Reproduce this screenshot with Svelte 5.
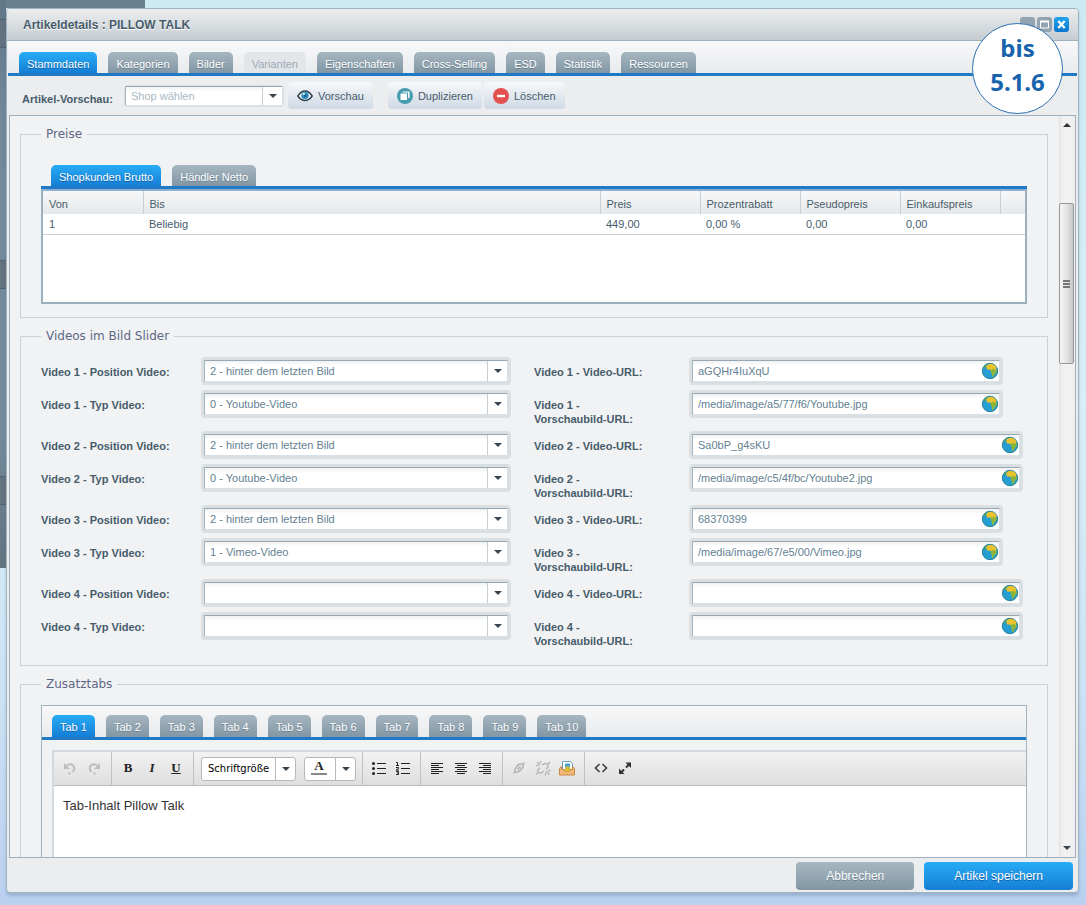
<script>
	const mainTabs = [
		'Stammdaten', 'Kategorien', 'Bilder', 'Varianten', 'Eigenschaften',
		'Cross-Selling', 'ESD', 'Statistik', 'Ressourcen'
	];
	const priceTabs = ['Shopkunden Brutto', 'Händler Netto'];
	const extraTabs = Array.from({ length: 10 }, (_, i) => `Tab ${i + 1}`);

	const positions = ['', '2 - hinter dem letzten Bild'];
	const types = ['', '0 - Youtube-Video', '1 - Vimeo-Video'];

	let activeMain = $state(0);
	let activePrice = $state(0);
	let activeExtra = $state(0);

	let videos = $state([
		{ position: positions[1], type: types[1], url: 'aGQHr4IuXqU', preview: '/media/image/a5/77/f6/Youtube.jpg', narrow: true },
		{ position: positions[1], type: types[1], url: 'Sa0bP_g4sKU', preview: '/media/image/c5/4f/bc/Youtube2.jpg' },
		{ position: positions[1], type: types[2], url: '68370399', preview: '/media/image/67/e5/00/Vimeo.jpg', narrow: true },
		{ position: '', type: '', url: '', preview: '' }
	]);

	let content = $state('Tab-Inhalt Pillow Talk');
</script>

{#snippet caret()}
	<svg class="caret" width="8" height="4" viewBox="0 0 8 4"><path d="M0 0h8L4 4z" fill="#3c4650" /></svg>
{/snippet}

{#snippet combo(id, item, key, options)}
	<div class="field combo">
		<select {id} bind:value={item[key]}>
			{#each options as option}
				<option value={option}>{option}</option>
			{/each}
		</select>
		<span class="trigger">{@render caret()}</span>
	</div>
{/snippet}

{#snippet urlField(id, item, key)}
	<div class="url" class:narrow={item.narrow}>
		<div class="field">
			<input {id} type="text" bind:value={item[key]} />
			<svg class="globe" width="18" height="18" viewBox="0 0 18 18">
				<circle cx="9" cy="9" r="7.700" fill="#259fd3" stroke="#2a8296" />
				<path d="M2.500 5A8 8 0 0 1 6 1.800L5 4.500 3 7z" fill="#4f9f6a" />
				<path d="M5.200 4.200C6 2.500 8 1.700 10 1.700c2.600.2 4.800 1.800 5.600 4.300L14 9.500 11.500 9 9.500 7.800 6 7.500z" fill="#ecc22c" />
				<path d="M9.600 7.500c1.800.6 2.300-1.200 3.600-.6.8.6 1 1.600 3 .9-.2 2.300-1.600 3.500-2.700 4.700-.7.900-.8 2.500-2 2.800-1-.8-.3-2.600-.9-3.800-.5-1.200-1.300-2-1-4z" fill="#8db53b" />
			</svg>
		</div>
	</div>
{/snippet}

<div class="desktop">
	<div class="backdrop-top"></div>
	<div class="backdrop-side"><i></i><i></i><i></i></div>

	<main class="window">
		<header>
			<h1>Artikeldetails : PILLOW TALK</h1>
			<div class="tools">
				<button aria-label="Minimieren"><svg viewBox="0 0 15 15"><path d="M4 10.500h7" stroke="#fff" stroke-width="2" /></svg></button>
				<button aria-label="Maximieren"><svg viewBox="0 0 15 15"><path d="M3.500 4.500h8v6.500h-8z" fill="none" stroke="#fff" /><path d="M3 4.500h9" stroke="#fff" stroke-width="2" /></svg></button>
				<button class="close" aria-label="Schließen"><svg viewBox="0 0 15 15"><path d="M4.300 4l6.400 7M10.700 4l-6.400 7" stroke="#fff" stroke-width="2.300" /></svg></button>
			</div>
			<div class="badge"><span>bis</span><span>5.1.6</span></div>
		</header>

		<nav class="tabs main">
			{#each mainTabs as tab, i}
				<button class:active={activeMain === i} disabled={tab === 'Varianten'} onclick={() => (activeMain = i)}><span>{tab}</span></button>
			{/each}
		</nav>

		<div class="toolbar">
			<label for="shop">Artikel-Vorschau:</label>
			<div class="field combo shop">
				<select id="shop"><option>Shop wählen</option></select>
				<span class="trigger">{@render caret()}</span>
			</div>
			<button class="preview">
				<svg width="16" height="14" viewBox="0 0 16 14">
					<path d="M.8 7Q4 2 8 2t7.200 5Q12 11.500 8 11.500T.8 7z" fill="#fff" stroke="#2d3f4c" stroke-width="1.400" />
					<circle cx="8" cy="6.500" r="3.800" fill="#3592c0" />
					<circle cx="8" cy="6.500" r="1.500" fill="#16587e" />
					<circle cx="6.800" cy="5" r="1.200" fill="#c9ecfa" />
				</svg>
				Vorschau
			</button>
			<button class="duplicate">
				<svg width="16" height="16" viewBox="0 0 16 16">
					<circle cx="8" cy="8" r="8" fill="#479caf" />
					<path d="M5.500 3.500h7v6.500h-7z" fill="#fff" />
					<path d="M3 5h7.500v7.500H3z" fill="#fff" stroke="#479caf" />
				</svg>
				Duplizieren
			</button>
			<button>
				<svg width="16" height="16" viewBox="0 0 16 16">
					<circle cx="8" cy="8" r="8" fill="#e2504f" />
					<path d="M4 8h8" stroke="#fff" stroke-width="2.400" />
				</svg>
				Löschen
			</button>
		</div>

		<div class="pane">
			<div class="content">
				<fieldset class="prices">
					<legend>Preise</legend>
					<nav class="tabs">
						{#each priceTabs as tab, i}
							<button class:active={activePrice === i} onclick={() => (activePrice = i)}><span>{tab}</span></button>
						{/each}
					</nav>
					<div class="grid">
						<table>
							<thead>
								<tr><th>Von</th><th class="wide">Bis</th><th>Preis</th><th>Prozentrabatt</th><th>Pseudopreis</th><th>Einkaufspreis</th><th class="rest"></th></tr>
							</thead>
							<tbody>
								<tr><td>1</td><td>Beliebig</td><td>449,00</td><td>0,00 %</td><td>0,00</td><td>0,00</td><td></td></tr>
							</tbody>
						</table>
					</div>
				</fieldset>

				<fieldset>
					<legend>Videos im Bild Slider</legend>
					<div class="videos">
						{#each videos as video, i}
							{@const n = i + 1}
							<label for="position{n}">Video {n} - Position Video:</label>
							{@render combo(`position${n}`, video, 'position', positions)}
							<label class="second" for="url{n}">Video {n} - Video-URL:</label>
							{@render urlField(`url${n}`, video, 'url')}

							<label for="type{n}">Video {n} - Typ Video:</label>
							{@render combo(`type${n}`, video, 'type', types)}
							<label class="second" for="preview{n}">Video {n} - <span>Vorschaubild-URL:</span></label>
							{@render urlField(`preview${n}`, video, 'preview')}
						{/each}
					</div>
				</fieldset>

				<fieldset>
					<legend>Zusatztabs</legend>
					<div class="panel">
						<nav class="tabs">
							{#each extraTabs as tab, i}
								<button class:active={activeExtra === i} onclick={() => (activeExtra = i)}><span>{tab}</span></button>
							{/each}
						</nav>
						<div class="editor">
							<div class="format">
								<div class="group">
									<button aria-label="Rückgängig"><svg viewBox="0 0 24 24"><path d="M9 9.500a4.200 4.200 0 1 1 5.500 6.300M12.500 17.500h-2" fill="none" stroke="#bcbcbc" stroke-width="2" /><path d="M6 7v6h6z" fill="#bcbcbc" /></svg></button>
									<button aria-label="Wiederholen"><svg viewBox="0 0 24 24"><path d="M15 9.500a4.200 4.200 0 1 0-5.500 6.300M11.500 17.500h2" fill="none" stroke="#bcbcbc" stroke-width="2" /><path d="M18 7v6h-6z" fill="#bcbcbc" /></svg></button>
								</div>
								<div class="group letters">
									<button><b>B</b></button>
									<button><i>I</i></button>
									<button><u>U</u></button>
								</div>
								<div class="group pickers">
									<div class="picker size">
										<select aria-label="Schriftgröße"><option>Schriftgröße</option></select>
										<span class="drop">{@render caret()}</span>
									</div>
									<button class="picker color" aria-label="Textfarbe">
										<span class="letter">A</span>
										<span class="drop">{@render caret()}</span>
									</button>
								</div>
								<div class="group">
									<button aria-label="Aufzählung"><svg viewBox="0 0 24 24"><path d="M10 7.500h9M10 12.500h9M10 17.500h9" stroke="#222" /><circle cx="6.500" cy="7.500" r="1.500" fill="#222" /><circle cx="6.500" cy="12.500" r="1.500" fill="#222" /><circle cx="6.500" cy="17.500" r="1.500" fill="#222" /></svg></button>
									<button aria-label="Nummerierung"><svg viewBox="0 0 24 24"><path d="M10 7.500h9M10 12.500h9M10 17.500h9" stroke="#222" /><path d="M5 6.500h1.500V9M5 9.500h3M5 11.500h2.500v1L5 14h3M5 15.500h2.500V17H6m1.500 0v1.500H5" fill="none" stroke="#222" /></svg></button>
								</div>
								<div class="group">
									<button aria-label="Linksbündig"><svg viewBox="0 0 24 24"><path d="M6 7.500h12M6 9.500h8M6 11.500h12M6 13.500h8M6 15.500h12M6 17.500h8" stroke="#222" /></svg></button>
									<button aria-label="Zentriert"><svg viewBox="0 0 24 24"><path d="M6 7.500h12M8 9.500h8M6 11.500h12M8 13.500h8M6 15.500h12M8 17.500h8" stroke="#222" /></svg></button>
									<button aria-label="Rechtsbündig"><svg viewBox="0 0 24 24"><path d="M6 7.500h12M10 9.500h8M6 11.500h12M10 13.500h8M6 15.500h12M10 17.500h8" stroke="#222" /></svg></button>
								</div>
								<div class="group">
									<button aria-label="Link"><svg viewBox="0 0 24 24"><path d="M9.500 10.500l3-2.500h3.500v3l-2.500 3M14 13.500l-3 2.500H8v-3l2.500-3M6.500 17.500L8 16M16 8l1.500-1.500M10.500 13.500l3-3" fill="none" stroke="#b5b5b5" stroke-width="1.700" /></svg></button>
									<button aria-label="Link entfernen"><svg viewBox="0 0 24 24"><path d="M11 9l3-1.500 3 .5v3l-2 2M13 15l-3 2-3-.5v-3l2-2M6 6l3 3M15 15l3.500 3.500M9.500 5v2.500M5 9.500h2.500M14.500 17v2.500M17 14.500h2.500M17 8l2-2M7 16.500l-2 2" fill="none" stroke="#b5b5b5" stroke-width="1.400" /></svg></button>
									<button aria-label="Medien"><svg viewBox="0 0 24 24">
										<path d="M7.500 5.500h8l2 2V14h-10z" fill="#fff" stroke="#6d9ab5" />
										<path d="M10 7.500h5v4h-5z" fill="#4ba1c9" /><path d="M10 12l2.500-2 3 2v2H10z" fill="#d8bb35" />
										<path d="M4.500 12.500l2-2v3h2.500l1 2h4.500l1-2h2v-3l2 2V19h-15z" fill="#f3b878" stroke="#c98844" />
										<path d="M10 14.500h4" stroke="#e0c51f" stroke-width="2" />
									</svg></button>
								</div>
								<div class="group last">
									<button aria-label="Quelltext"><svg viewBox="0 0 24 24"><path d="M10.500 8L6.500 12l4 4M13.500 8l4 4-4 4" fill="none" stroke="#444" stroke-width="1.700" /></svg></button>
									<button aria-label="Vollbild"><svg viewBox="0 0 24 24"><path d="M12.500 6.500H18V12zM6 12.500V18h5.500z" fill="#333" /><path d="M17 7.500l-4 4M11 13.500l-4 4" stroke="#333" stroke-width="2" /></svg></button>
								</div>
							</div>
							<textarea aria-label="Inhalt" bind:value={content}></textarea>
						</div>
					</div>
				</fieldset>
			</div>

			<div class="scrollbar">
				<button aria-label="Nach oben"><svg width="8" height="4" viewBox="0 0 8 4"><path d="M0 4h8L4 0z" fill="#333" /></svg></button>
				<div class="above"></div>
				<div class="thumb"><i></i><i></i><i></i></div>
				<div class="below"></div>
				<button aria-label="Nach unten">{@render caret()}</button>
			</div>
		</div>

		<footer>
			<button>Abbrechen</button>
			<button class="primary">Artikel speichern</button>
		</footer>
	</main>
</div>

<style>
:global(body) {
	margin: 0;
}

.desktop {
	position: relative;
	box-sizing: border-box;
	display: flex;
	height: 100vh;
	padding: 8px 7px 12px 6px;
	background: linear-gradient(#cceaf4, #d9eff7 45%, #cde3f5 75%, #b9d1ef);
	font: 11px/14px "Liberation Sans", Arial, sans-serif;
	color: #475c6a;
}

button, input, select, textarea {
	box-sizing: border-box;
	margin: 0;
	padding: 0;
	border: 0;
	border-radius: 0;
	background: none;
	font: inherit;
	color: inherit;
	outline: none;
}

.backdrop-top {
	position: absolute;
	top: 0;
	left: 0;
	width: 145px;
	height: 8px;
	background: #68808f;
}

.backdrop-side {
	position: absolute;
	top: 0;
	left: 0;
	width: 6px;
	height: 568px;
	background: linear-gradient(#607887, #71899a 20%, #758b9c 75%, #62747f);
}

.backdrop-side i {
	position: absolute;
	top: 260px;
	width: 6px;
	height: 27px;
	border: solid #50636f;
	border-width: 1px 0;
	background: #63737f;
}

.backdrop-side i:first-child {
	top: 19px;
}

.backdrop-side i:last-child {
	top: 476px;
}

.window {
	position: relative;
	flex: 1;
	min-width: 0;
	display: flex;
	flex-direction: column;
	border: 1px solid #9fb3c1;
	border-radius: 4px;
	background: #ebedef;
	box-shadow: 0 3px 3px rgba(80, 110, 150, .3);
}

header {
	position: relative;
	display: flex;
	align-items: center;
	justify-content: space-between;
	height: 31px;
	padding: 0 9px 0 16px;
	border-bottom: 1px solid #9fb0bb;
	border-radius: 3px 3px 0 0;
	background: linear-gradient(#eceeef, #c5cdd2);
}

h1 {
	margin: 0;
	font-size: 12px;
	line-height: 16px;
	text-shadow: 0 1px 0 #fff;
}

.tools {
	display: flex;
	gap: 2px;
}

.tools button {
	width: 15px;
	height: 15px;
	border-radius: 3px;
	background: #93a4b0;
}

.tools .close {
	background: linear-gradient(#23a3ee, #0b76cc);
}

.tools svg {
	display: block;
}

.badge {
	position: absolute;
	z-index: 1;
	top: 14px;
	right: 15px;
	box-sizing: border-box;
	display: flex;
	flex-direction: column;
	align-items: center;
	width: 91px;
	height: 91px;
	padding-top: 7px;
	border: 1px solid #2b70b4;
	border-radius: 50%;
	background: #fff;
	font: bold 24px/34px "Noto Sans", "Open Sans", sans-serif;
	color: #1763ad;
}

.tabs {
	display: flex;
	gap: 11px;
	padding: 0 10px;
	border-bottom: 3px solid #2079c4;
}

.tabs button {
	height: 21px;
	padding: 3px 8px 0;
	border-radius: 5px 5px 0 0;
	background: linear-gradient(#a7b7c1, #8196a4);
	color: #fff;
	text-shadow: 0 1px 0 #6b7f8d;
}

.tabs .active {
	background: linear-gradient(#28acf5, #157ed5);
	text-shadow: 0 1px 0 #0f5fa8;
}

.tabs button:disabled {
	background: #e3e6e8;
	color: #9cabb7;
	text-shadow: none;
}

.tabs span {
	display: block;
	white-space: nowrap;
}

.tabs.main {
	margin: 0 1px;
	padding: 11px 11px 0;
	background: linear-gradient(#f8f8f9, #e9ebed);
}

.main button {
	padding-top: 2px;
}

.main span {
	height: 13px;
	overflow: hidden;
}

.toolbar {
	display: flex;
	align-items: center;
	height: 39px;
	padding-left: 15px;
}

.toolbar label {
	width: 102px;
	padding-top: 6px;
	font-weight: bold;
	white-space: nowrap;
}

.toolbar button {
	display: flex;
	align-items: center;
	gap: 5px;
	height: 27px;
	padding: 0 9px;
	margin-right: 2px;
	border-radius: 4px;
	background: linear-gradient(#f7f8fa, #cfd9e5);
}

.toolbar .preview {
	margin-right: 15px;
}

.field {
	position: relative;
	display: flex;
	height: 22px;
	border: 3px solid #d9dfe3;
	border-radius: 4px;
	background: #fff;
	color: #637f92;
}

.field input, .field select {
	flex: 1;
	min-width: 0;
	height: 22px;
	padding: 0 5px;
	border: 1px solid #a9b6bf;
	border-color: #97a8b3 #d9dfe3 #d9dfe3 #a5b3bd;
	background: linear-gradient(#f0f2f3, #fff 5px);
	appearance: none;
}

.field select {
	padding-right: 24px;
}

.trigger {
	position: absolute;
	top: 1px;
	right: 1px;
	bottom: 1px;
	display: flex;
	align-items: center;
	justify-content: center;
	width: 19px;
	border-left: 1px solid #c5ced5;
	background: #fff;
	pointer-events: none;
}

.caret {
	display: block;
}

.shop {
	width: 158px;
	height: 20px;
	margin-right: 4px;
	border-width: 1px;
	color: #a9b8c4;
}

.shop select {
	height: 20px;
}

.pane {
	flex: 1;
	display: flex;
	min-height: 0;
	margin: 0 2px;
	border: 1px solid #9fb0bc;
	background: #f0f2f4;
}

.content {
	flex: 1;
	min-width: 0;
	padding: 10px 11px 0 10px;
	overflow: hidden;
}

fieldset {
	min-width: 0;
	margin: 0 0 10px;
	padding: 13px 20px 17px;
	border: 1px solid #cad1d6;
}

legend {
	padding: 0 5px;
	font: 12px/16px "DejaVu Sans", Verdana, sans-serif;
	color: #5f6785;
}

.prices {
	padding: 23px 20px 13px;
}

.grid {
	height: 111px;
	border: 2px solid #9ab0bf;
	border-top-color: #8db0d0;
	background: #fff;
}

table {
	width: 100%;
	table-layout: fixed;
	border-collapse: collapse;
}

th, td {
	box-sizing: border-box;
	width: 100px;
	padding: 0 6px;
	font-weight: normal;
	text-align: left;
}

th {
	height: 23px;
	padding-top: 3px;
	border-right: 1px solid #c8cfd4;
	background: linear-gradient(#f7f7f8, #e5e8ea);
}

th.wide {
	width: auto;
}

th.rest {
	width: 25px;
	border-right: 0;
}

td {
	height: 20px;
	border-bottom: 1px solid #c7d1d6;
}

.videos {
	display: grid;
	grid-template-columns: 160px minmax(0, 310fr) 178px minmax(0, 338fr);
	row-gap: 5px;
	align-items: start;
}

.videos label {
	min-height: 14px;
	padding-top: 8px;
	font-weight: bold;
}

.videos .second {
	padding-left: 23px;
	padding-right: 20px;
}

.second span {
	display: block;
}

.url {
	padding-right: 4px;
}

.url.narrow {
	padding-right: 24px;
}

.url input {
	padding-right: 26px;
}

.globe {
	position: absolute;
	top: 2px;
	right: 1px;
}

.panel {
	border: 1px solid #9fb3c1;
	background: #f0f2f4;
}

.panel .tabs {
	padding-top: 9px;
	background: linear-gradient(#f8f8f9, #e9ebed);
}

.panel .tabs button {
	height: 22px;
	padding-top: 2px;
}

.editor {
	margin: 10px 0 0 10px;
	border: solid #d3d9de;
	border-width: 2px 0 0 2px;
}

.format {
	display: flex;
	height: 33px;
	border: solid #b9bdc0;
	border-width: 0 0 1px;
	background: linear-gradient(#f2f2f2, #dedede);
	color: #222;
}

.group {
	box-sizing: border-box;
	display: flex;
	align-items: center;
	height: 33px;
	padding: 0 5px 1px 4px;
	border-right: 1px solid #bfc2c4;
}

.group.last {
	border-right: 0;
}

.group button {
	width: 24px;
	height: 24px;
}

.group button > svg {
	display: block;
}

.letters {
	font: 13px/16px "Liberation Serif", serif;
}

.letters i, .letters u {
	font-weight: bold;
}

.pickers {
	gap: 8px;
	padding: 1px 6px 0 7px;
}

.picker, .group .picker {
	position: relative;
	box-sizing: border-box;
	display: flex;
	width: 95px;
	height: 24px;
	border: 1px solid #b3b9be;
	border-radius: 3px;
	background: #fff;
}

.group .color {
	width: 52px;
}

.picker select {
	width: 100%;
	padding: 0 20px 0 6px;
	border-radius: 3px;
	appearance: none;
	font: 10px/16px "DejaVu Sans", Tahoma, sans-serif;
	color: #000;
}

.drop {
	position: absolute;
	top: 0;
	right: 0;
	bottom: 0;
	display: flex;
	align-items: center;
	justify-content: center;
	width: 19px;
	border-left: 1px solid #b3b9be;
	pointer-events: none;
}

.letter {
	width: 16px;
	height: 15px;
	margin-left: 6px;
	border-bottom: 2px solid #888;
	font: bold 13px/16px "Liberation Serif", serif;
}

textarea {
	display: block;
	width: 100%;
	height: 200px;
	padding: 12px 9px;
	background: #fff;
	font-size: 13px;
	line-height: 16px;
	color: #333;
	resize: none;
}

.scrollbar {
	display: flex;
	flex-direction: column;
	width: 16px;
	background: linear-gradient(90deg, #e2e3e5, #f2f2f3 4px, #efeff0);
}

.scrollbar button {
	display: flex;
	align-items: center;
	justify-content: center;
	height: 18px;
}

.above {
	flex: 69;
}

.thumb {
	flex: 159;
	display: flex;
	flex-direction: column;
	align-items: center;
	justify-content: center;
	gap: 1px;
	margin-right: 1px;
	border: 1px solid #97999c;
	border-radius: 2px;
	background: linear-gradient(90deg, #f6f6f6, #e4e4e5 50%, #c6c7ca);
}

.thumb i {
	width: 7px;
	height: 2px;
	background: #777;
}

.below {
	flex: 475;
}

footer {
	display: flex;
	justify-content: flex-end;
	gap: 10px;
	padding: 4px 5px 2px;
}

footer button {
	min-width: 117px;
	height: 28px;
	padding: 0 30px;
	border-radius: 4px;
	background: linear-gradient(#a7b7c1, #8196a4);
	font-size: 12px;
	color: #fff;
	text-shadow: 0 1px 0 #6b7f8d;
}

footer .primary {
	background: linear-gradient(#28acf5, #157ed5);
	text-shadow: 0 1px 0 #0f5fa8;
}
</style>
